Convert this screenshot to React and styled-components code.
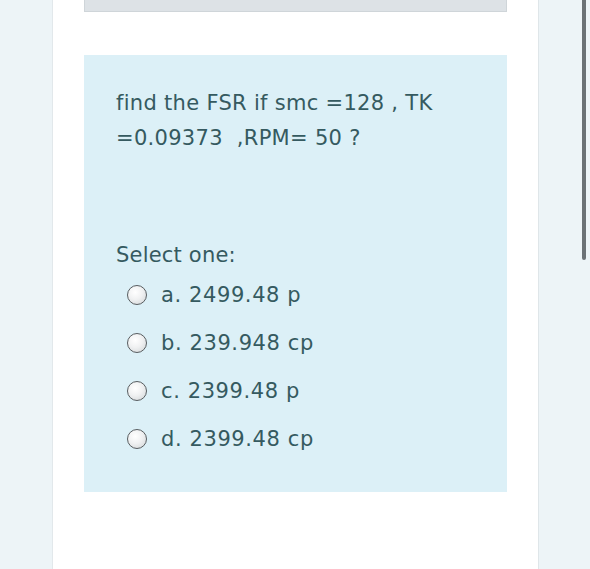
import styled, { createGlobalStyle } from "styled-components";

const Global = createGlobalStyle`
  html, body {
    margin: 0;
    padding: 0;
    background: #edf4f7;
  }
  body {
    font-family: "DejaVu Sans", "Noto Sans", sans-serif;
  }
`;

const Page = styled.div`
  position: relative;
  display: flex;
  width: 590px;
  height: 569px;
  overflow: hidden;
  padding-left: 52px;
  box-sizing: border-box;
  background: #edf4f7;
`;

const Card = styled.div`
  width: 487px;
  box-sizing: border-box;
  background: #ffffff;
  border-left: 1px solid #e2e8eb;
  border-right: 1px solid #dfe6e9;
  padding: 0 31px;
`;

const TopBox = styled.div`
  height: 12px;
  background: #dde2e6;
  border: 1px solid #cfd5d9;
  border-top: none;
  box-sizing: border-box;
  margin-bottom: 43px;
`;

const QuestionBox = styled.div`
  background: #dcf0f7;
  padding: 31px 32px 33px 32px;
  height: 437px;
  box-sizing: border-box;
  color: #355a60;
`;

const Question = styled.p`
  margin: 0;
  font-size: 21px;
  line-height: 35px;
  letter-spacing: 0.3px;
`;

const Prompt = styled.p`
  margin: 82px 0 0 0;
  font-size: 21px;
  line-height: 34px;
  letter-spacing: 0.2px;
`;

const Options = styled.div`
  display: flex;
  flex-direction: column;
  margin-top: -1px;
`;

const Option = styled.label`
  display: flex;
  align-items: center;
  height: 48px;
  padding-left: 11px;
  gap: 14px;
  font-size: 21px;
  letter-spacing: 0.6px;
`;

const Radio = styled.span`
  width: 20px;
  height: 20px;
  border-radius: 50%;
  box-sizing: border-box;
  border: 1.6px solid #585d60;
  background: radial-gradient(circle at 40% 35%, #ffffff 0%, #f0f1f2 45%, #cfd3d5 100%);
  flex-shrink: 0;
`;

const Scrollbar = styled.div`
  position: absolute;
  top: 0;
  left: 582px;
  width: 4px;
  height: 260px;
  border-radius: 0 0 2px 2px;
  background: #6c7276;
`;

const options = [
  "a. 2499.48 p",
  "b. 239.948 cp",
  "c. 2399.48 p",
  "d. 2399.48 cp",
];

export default function App() {
  return (
    <>
      <Global />
      <Page>
        <Card>
          <TopBox />
          <QuestionBox>
            <Question>
              find the FSR if smc =128 , TK
              <br />
              =0.09373 &nbsp;,RPM= 50 ?
            </Question>
            <Prompt>Select one:</Prompt>
            <Options>
              {options.map((o) => (
                <Option key={o}>
                  <Radio />
                  {o}
                </Option>
              ))}
            </Options>
          </QuestionBox>
        </Card>
        <Scrollbar />
      </Page>
    </>
  );
}
